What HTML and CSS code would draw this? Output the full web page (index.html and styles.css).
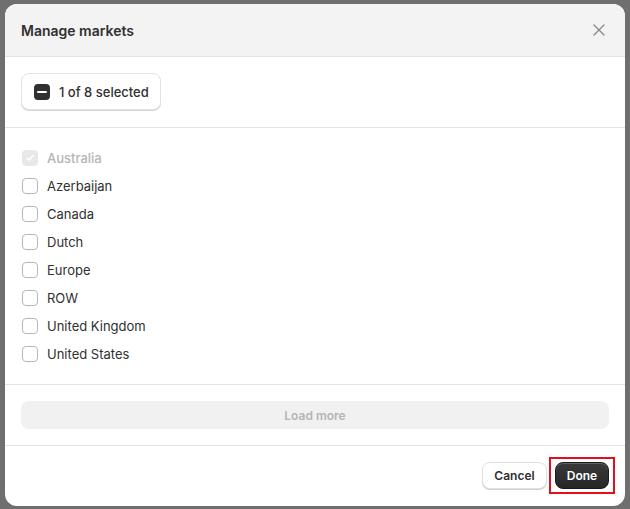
FILE: index.html
```html
<!DOCTYPE html>
<html>
<head>
<meta charset="utf-8">
<link rel="stylesheet" href="styles.css">
</head>
<body>
<div class="modal">
  <div class="modal-header">
    <h2 class="modal-title">Manage markets</h2>
    <button class="close-btn" aria-label="Close">
      <svg width="12" height="12" viewBox="0 0 12 12"><path d="M1 1L11 11M11 1L1 11" stroke="#8a8a8a" stroke-width="1.4" stroke-linecap="round"/></svg>
    </button>
  </div>
  <div class="section select-section">
    <button class="select-btn">
      <span class="indeterminate"><span class="dash"></span></span>
      <span class="select-text">1 of 8 selected</span>
    </button>
  </div>
  <div class="section list-section">
    <label class="row disabled"><span class="cb checked"><svg width="10" height="10" viewBox="0 0 10 10"><path d="M2 5.2L4.1 7.2L8 2.8" fill="none" stroke="#fff" stroke-width="1.5" stroke-linecap="round" stroke-linejoin="round"/></svg></span><span class="label">Australia</span></label>
    <label class="row"><span class="cb"></span><span class="label">Azerbaijan</span></label>
    <label class="row"><span class="cb"></span><span class="label">Canada</span></label>
    <label class="row"><span class="cb"></span><span class="label">Dutch</span></label>
    <label class="row"><span class="cb"></span><span class="label">Europe</span></label>
    <label class="row"><span class="cb"></span><span class="label">ROW</span></label>
    <label class="row"><span class="cb"></span><span class="label">United Kingdom</span></label>
    <label class="row"><span class="cb"></span><span class="label">United States</span></label>
  </div>
  <div class="section load-section">
    <button class="load-btn">Load more</button>
  </div>
  <div class="modal-footer">
    <button class="btn btn-secondary">Cancel</button>
    <span class="highlight-wrap">
      <button class="btn btn-primary">Done</button>
      <span class="highlight"></span>
    </span>
  </div>
</div>
</body>
</html>
```

FILE: styles.css
```css
* { box-sizing: border-box; }
html, body { margin: 0; height: 100%; }
body {
  background: #6f6f6f;
  font-family: Inter, "Noto Sans", "Liberation Sans", sans-serif;
  color: #303030;
  padding: 4px 5px 3px 5px;
  -webkit-font-smoothing: antialiased;
}
button { font-family: inherit; }
.modal {
  width: 620px;
  height: 502px;
  background: #fff;
  border-radius: 12px;
  overflow: hidden;
  display: flex;
  flex-direction: column;
}
.modal-header {
  height: 53px;
  background: #f3f3f3;
  border-bottom: 1px solid #e3e3e3;
  display: flex;
  align-items: center;
  justify-content: space-between;
  padding: 0 18px 0 16px;
}
.modal-title {
  margin: 0;
  font-size: 14px;
  font-weight: 600;
  color: #303030;
}
.close-btn {
  border: 0;
  background: none;
  padding: 0;
  width: 16px;
  height: 16px;
  display: flex;
  align-items: center;
  justify-content: center;
}
.section {
  padding: 16px;
  border-bottom: 1px solid #e3e3e3;
}
.select-section { padding: 16px; height: 71px; }
.select-btn {
  height: 37px;
  width: 140px;
  display: flex;
  align-items: center;
  gap: 9px;
  padding: 0 10px 0 12px;
  background: #fff;
  border: 1px solid #e3e3e3;
  border-radius: 8px;
  box-shadow: 0 1px 0 #d4d4d4;
  font-size: 13px;
  font-weight: 550;
  color: #303030;
  white-space: nowrap;
}
.select-text { white-space: nowrap; }
.indeterminate {
  flex: none;
  width: 16px;
  height: 16px;
  border-radius: 4px;
  background: #303030;
  display: flex;
  align-items: center;
  justify-content: center;
}
.dash { width: 10px; height: 2px; background: #fff; border-radius: 1px; }
.list-section { padding: 16px; height: 257px; }
.row {
  height: 28px;
  display: flex;
  align-items: center;
  gap: 9px;
  font-size: 13px;
  color: #303030;
  padding-left: 1px;
}
.cb {
  width: 16px;
  height: 16px;
  border: 1px solid #b5b5b5;
  border-radius: 4px;
  background: #fff;
  display: flex;
  align-items: center;
  justify-content: center;
}
.cb.checked { background: #e8e8e8; border-color: #e8e8e8; }
.row.disabled .label { color: #b5b5b5; font-weight: 500; }
.load-section { height: 61px; }
.load-btn {
  width: 100%;
  height: 28px;
  border: 0;
  border-radius: 8px;
  background: #f1f1f1;
  color: #b5b5b5;
  font-size: 12px;
  font-weight: 600;
}
.modal-footer {
  flex: 1;
  display: flex;
  justify-content: flex-end;
  align-items: flex-start;
  gap: 8px;
  padding: 16px;
}
.btn {
  height: 27px;
  border-radius: 8px;
  font-size: 12px;
  font-weight: 600;
  padding: 0;
}
.btn-secondary {
  width: 65px;
  background: #fff;
  color: #303030;
  border: 1px solid #e0e0e0;
  box-shadow: 0 1px 0 #d0d0d0;
}
.btn-primary {
  width: 54px;
  background: linear-gradient(#3a3a3a, #262626);
  color: #fff;
  border: 1px solid #1a1a1a;
  box-shadow: inset 0 1px 0 rgba(255,255,255,0.2);
  display: block;
}
.highlight-wrap { position: relative; display: block; }
.highlight {
  position: absolute;
  left: -6px;
  right: -6px;
  top: -5px;
  bottom: -5px;
  border: 2px solid #e3101a;
  pointer-events: none;
}
```
